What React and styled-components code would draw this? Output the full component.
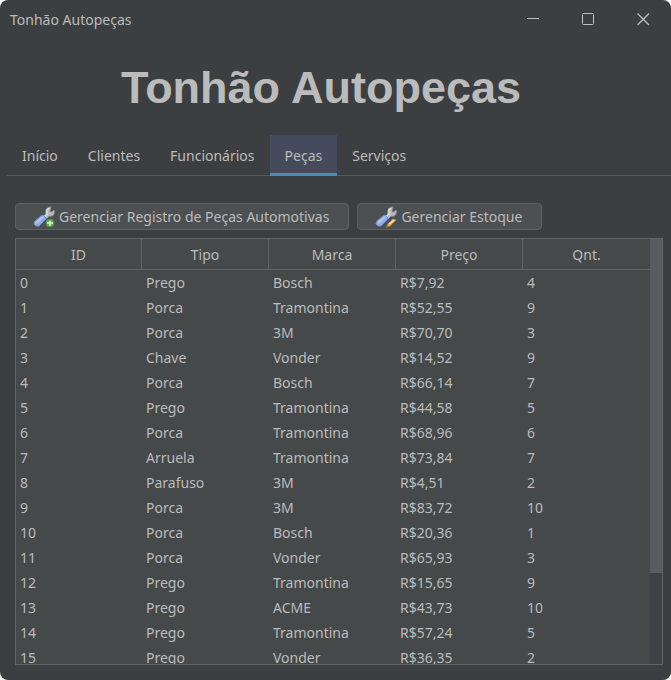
import React, { useState } from "react";
import styled, { createGlobalStyle } from "styled-components";

const GlobalStyle = createGlobalStyle`
  * { box-sizing: border-box; }
  body { margin: 0; background: #ffffff; }
  button { font: inherit; color: inherit; }
`;

const Window = styled.div`
  display: flex;
  flex-direction: column;
  height: 100vh;
  overflow: hidden;
  border-radius: 8px;
  background: #3c3f41;
  color: #bbbbbb;
  font-family: "Noto Sans", "Open Sans", sans-serif;
  font-size: 14px;
  line-height: 20px;
`;

const TitleBar = styled.header`
  display: flex;
  align-items: center;
  justify-content: space-between;
  flex: none;
  height: 39px;
  padding-left: 10px;
`;

const WindowTitle = styled.span`
  white-space: nowrap;
`;

const WindowControls = styled.div`
  display: flex;
  height: 100%;
`;

const WindowButton = styled.button`
  display: flex;
  align-items: center;
  justify-content: center;
  width: 55px;
  padding: 0;
  border: 0;
  background: transparent;
`;

const Heading = styled.h1`
  flex: none;
  margin: 0;
  height: 96px;
  padding-right: 29px;
  font-family: "Liberation Sans", Arial, sans-serif;
  font-size: 45px;
  font-weight: 700;
  line-height: 98px;
  text-align: center;
  white-space: nowrap;
`;

const TabBar = styled.nav`
  display: flex;
  flex: none;
  height: 41px;
  margin-left: 7px;
  border-bottom: 1px solid #55585a;
`;

const Tab = styled.button`
  height: 41px;
  padding: 3px 15px 0;
  border: 0;
  border-bottom: 3px solid ${(p) => (p.$active ? "#4a88c7" : "transparent")};
  background: ${(p) => (p.$active ? "#434b5d" : "transparent")};
`;

const Panel = styled.main`
  display: flex;
  flex: 1;
  flex-direction: column;
  gap: 8px;
  min-height: 0;
  padding: 27px 8px 15px 15px;
`;

const Toolbar = styled.div`
  display: flex;
  flex: none;
  gap: 8px;
`;

const ToolButton = styled.button`
  display: flex;
  align-items: center;
  gap: 4px;
  height: 27px;
  padding: 0 19px 0 17px;
  border: 1px solid #5e6060;
  border-radius: 4px;
  background: #4c5052;
  white-space: nowrap;
`;

const ScrollPane = styled.div`
  display: flex;
  flex: 1;
  min-height: 0;
  border: 1px solid #616365;
`;

const Viewport = styled.div`
  flex: 1;
  overflow-y: auto;
  scrollbar-width: none;
  background: #45494a;
`;

const ScrollTrack = styled.div`
  width: 12px;
  background: #3f4244;
`;

const ScrollThumb = styled.div`
  height: 78.5%;
  background: #585c5e;
`;

const Table = styled.table`
  width: 100%;
  table-layout: fixed;
  border-collapse: separate;
  border-spacing: 0;
`;

const HeaderCell = styled.th`
  height: 31px;
  padding: 2px 0 0;
  border-bottom: 1px solid #616365;
  font-weight: 400;

  &:first-child { width: 126px; }
  &:not(:last-child) { border-right: 1px solid #616365; }
`;

const Cell = styled.td`
  height: 25px;
  padding: 0 4px;
`;

const WrenchSvg = styled.svg`
  flex: none;
`;

function WrenchIcon({ badge }) {
  return (
    <WrenchSvg width="22" height="22" viewBox="0 0 22 22" aria-hidden="true">
      <path d="M10 11 L13 8 C12 4 14 1 18 1 L17 4 L17 6 L19 6 L21 4 C22 8 20 11 16 10 L13 13 Z" fill="#bcbcbc" stroke="#969696" />
      <path d="M11 11 L14 8 L14 4 L16 2" fill="none" stroke="#dededc" strokeWidth="1.5" />
      <path d="M8 10 L10 9 L13 12 L12 14 L6 20 L3 20 L1 18 L2 15 Z" fill="#91acdf" stroke="#6f91d4" />
      <path d="M3 17 L10 11" stroke="#b5caf0" strokeWidth="2" />
      {badge === "add" ? (
        <>
          <circle cx="17" cy="17" r="4" fill="#62b053" stroke="#4c9243" />
          <path d="M17 15 V20 M14 17 H20" stroke="#e2f1d9" strokeWidth="1.5" />
        </>
      ) : (
        <>
          <path d="M13 18 L18 13 L21 14 L15 20 L11 21 Z" fill="#e8b24d" stroke="#c18c34" />
          <path d="M14 18 L19 14" stroke="#ffe09a" strokeWidth="1.6" />
          <path d="M11 21 L12 19 L13 20 Z" fill="#624b37" />
        </>
      )}
    </WrenchSvg>
  );
}

const tabs = ["Início", "Clientes", "Funcionários", "Peças", "Serviços"];
const columns = ["ID", "Tipo", "Marca", "Preço", "Qnt."];
const parts = [
  ["Prego", "Bosch", "R$7,92", 4],
  ["Porca", "Tramontina", "R$52,55", 9],
  ["Porca", "3M", "R$70,70", 3],
  ["Chave", "Vonder", "R$14,52", 9],
  ["Porca", "Bosch", "R$66,14", 7],
  ["Prego", "Tramontina", "R$44,58", 5],
  ["Porca", "Tramontina", "R$68,96", 6],
  ["Arruela", "Tramontina", "R$73,84", 7],
  ["Parafuso", "3M", "R$4,51", 2],
  ["Porca", "3M", "R$83,72", 10],
  ["Porca", "Bosch", "R$20,36", 1],
  ["Porca", "Vonder", "R$65,93", 3],
  ["Prego", "Tramontina", "R$15,65", 9],
  ["Prego", "ACME", "R$43,73", 10],
  ["Prego", "Tramontina", "R$57,24", 5],
  ["Prego", "Vonder", "R$36,35", 2],
];

export default function App() {
  const [active, setActive] = useState("Peças");
  return (
    <>
      <GlobalStyle />
      <Window>
        <TitleBar>
          <WindowTitle>Tonhão Autopeças</WindowTitle>
          <WindowControls>
            <WindowButton aria-label="Minimizar">
              <svg width="13" height="13" fill="none" stroke="#c0c0c0"><path d="M0 5.5 H12" /></svg>
            </WindowButton>
            <WindowButton aria-label="Maximizar">
              <svg width="13" height="13" fill="none" stroke="#c0c0c0"><rect x="0.5" y="0.5" width="11" height="11" rx="1" /></svg>
            </WindowButton>
            <WindowButton aria-label="Fechar">
              <svg width="13" height="13" fill="none" stroke="#c0c0c0" strokeWidth="1.2"><path d="M0.5 0.5 L12 12 M12 0.5 L0.5 12" /></svg>
            </WindowButton>
          </WindowControls>
        </TitleBar>
        <Heading>Tonhão Autopeças</Heading>
        <TabBar>
          {tabs.map((t) => (
            <Tab key={t} $active={t === active} onClick={() => setActive(t)}>{t}</Tab>
          ))}
        </TabBar>
        <Panel>
          <Toolbar>
            <ToolButton><WrenchIcon badge="add" />Gerenciar Registro de Peças Automotivas</ToolButton>
            <ToolButton><WrenchIcon badge="edit" />Gerenciar Estoque</ToolButton>
          </Toolbar>
          <ScrollPane>
            <Viewport>
              <Table>
                <thead>
                  <tr>{columns.map((c) => <HeaderCell key={c} scope="col">{c}</HeaderCell>)}</tr>
                </thead>
                <tbody>
                  {parts.map((row, id) => (
                    <tr key={id}>
                      <Cell>{id}</Cell>
                      {row.map((value, i) => <Cell key={i}>{value}</Cell>)}
                    </tr>
                  ))}
                </tbody>
              </Table>
            </Viewport>
            <ScrollTrack><ScrollThumb /></ScrollTrack>
          </ScrollPane>
        </Panel>
      </Window>
    </>
  );
}
